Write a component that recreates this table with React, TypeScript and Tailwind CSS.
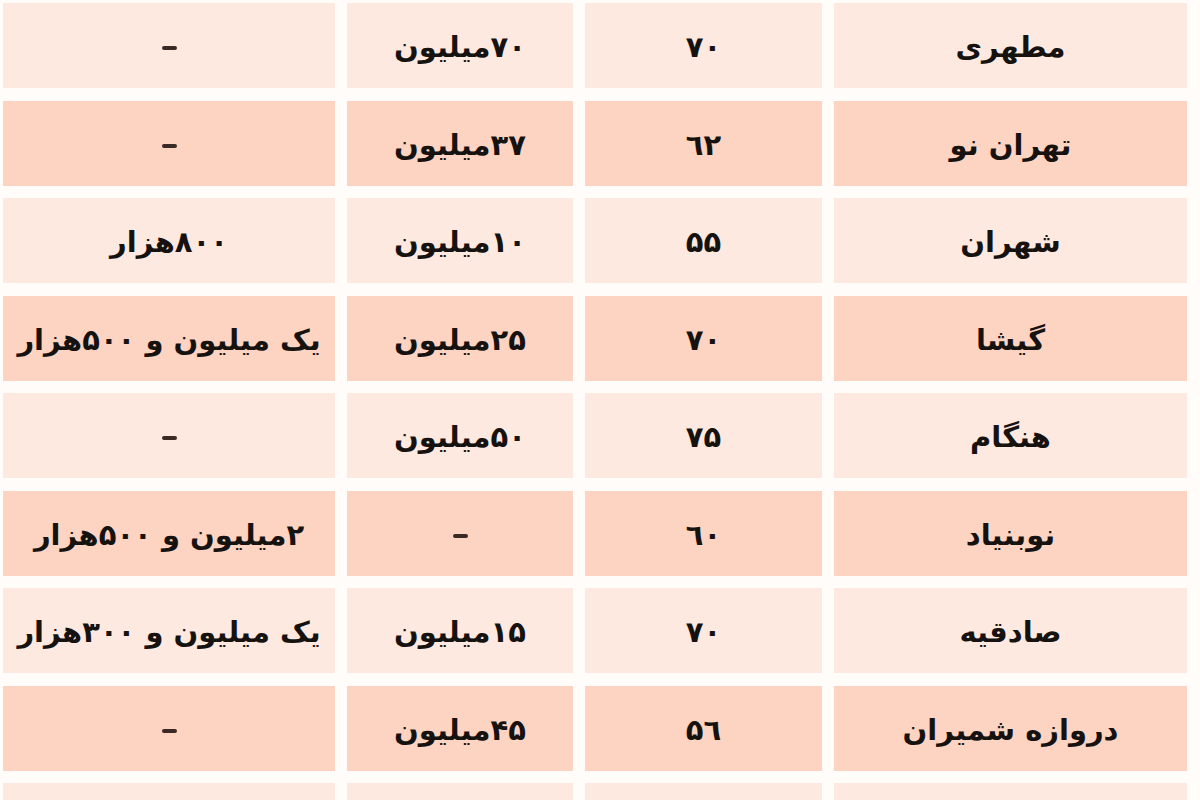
const rows: string[][] = [
  ["مطهری", "۷۰", "۷۰میلیون", "–"],
  ["تهران نو", "٦٢", "۳۷میلیون", "–"],
  ["شهران", "۵۵", "۱۰میلیون", "۸۰۰هزار"],
  ["گیشا", "۷۰", "۲۵میلیون", "یک میلیون و ۵۰۰هزار"],
  ["هنگام", "۷۵", "۵۰میلیون", "–"],
  ["نوبنیاد", "٦۰", "–", "۲میلیون و ۵۰۰هزار"],
  ["صادقیه", "۷۰", "۱۵میلیون", "یک میلیون و ۳۰۰هزار"],
  ["دروازه شمیران", "۵٦", "۴۵میلیون", "–"],
  ["", "", "", ""],
];

export default function App() {
  return (
    <div className="w-[1200px] h-[800px] overflow-hidden bg-[#fffcfa]">
      <div
        dir="rtl"
        className="grid grid-cols-[353px_237px_226px_332px] gap-x-3 gap-y-[12.5px] pt-[3px] pr-[13px] pl-[3px]"
        style={{ fontFamily: '"DejaVu Sans", sans-serif' }}
      >
        {rows.map((row, i) =>
          row.map((cell, j) => (
            <div
              key={`${i}-${j}`}
              className={`h-[85px] flex items-center justify-center pt-[5px] whitespace-nowrap text-[29px] font-bold text-[#161210] ${
                i % 2 === 0 ? "bg-[#fde9e0]" : "bg-[#fdd3c2]"
              }`}
            >
              {cell === "–" ? (
                <span className="block w-[15px] h-[4px] rounded-full bg-[#3a2a26]" />
              ) : (
                cell
              )}
            </div>
          ))
        )}
      </div>
    </div>
  );
}
